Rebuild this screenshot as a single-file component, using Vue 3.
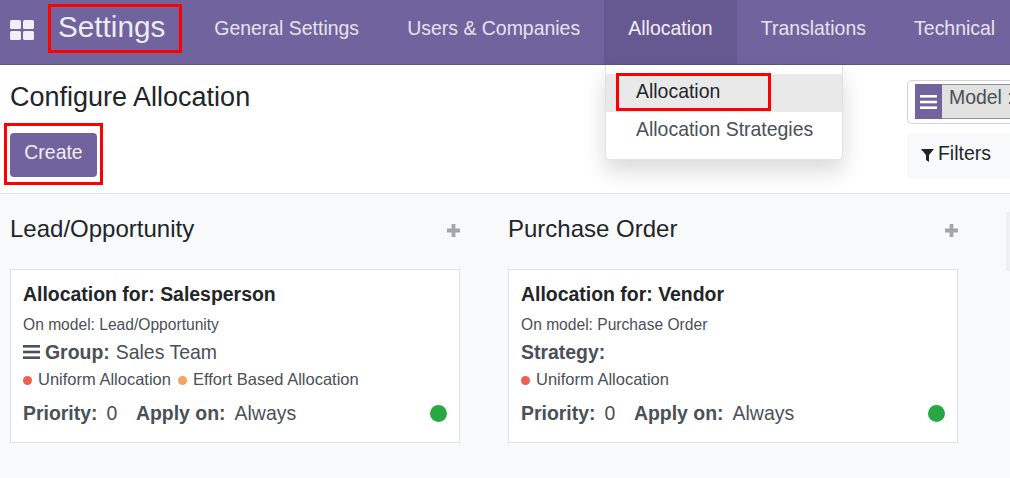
<script setup>
const menus = [
  { label: 'General Settings' },
  { label: 'Users & Companies' },
  { label: 'Allocation', active: true },
  { label: 'Translations' },
  { label: 'Technical' },
]
const columns = [
  {
    title: 'Lead/Opportunity',
    name: 'Salesperson',
    model: 'Lead/Opportunity',
    label: 'Group:',
    value: 'Sales Team',
    icon: true,
    tags: [
      { text: 'Uniform Allocation', color: '#ee5f52' },
      { text: 'Effort Based Allocation', color: '#f4a460' },
    ],
  },
  {
    title: 'Purchase Order',
    name: 'Vendor',
    model: 'Purchase Order',
    label: 'Strategy:',
    value: '',
    icon: false,
    tags: [{ text: 'Uniform Allocation', color: '#ee5f52' }],
  },
]
</script>

<template>
  <div class="page">
    <header class="navbar">
      <button class="apps" aria-label="Apps">
        <svg width="24" height="20" viewBox="0 0 24 20"><rect x="0" y="0" width="11" height="9" rx="1.5" /><rect x="13" y="0" width="11" height="9" rx="1.5" /><rect x="0" y="11" width="11" height="9" rx="1.5" /><rect x="13" y="11" width="11" height="9" rx="1.5" /></svg>
      </button>
      <span class="brand">Settings</span>
      <nav class="menu">
        <span v-for="m in menus" :key="m.label" class="menu-item" :class="{ active: m.active }">{{ m.label }}</span>
      </nav>
    </header>

    <section class="panel">
      <div class="panel-left">
        <h1 class="title">Configure Allocation</h1>
        <button class="create">Create</button>
      </div>
      <div class="panel-right">
        <div class="search">
          <span class="facet-icon">
            <svg width="17" height="14" viewBox="0 0 17 14"><rect y="0" width="17" height="2.6" /><rect y="5.7" width="17" height="2.6" /><rect y="11.4" width="17" height="2.6" /></svg>
          </span>
          <span class="facet-text">Model :</span>
        </div>
        <div class="filters">
          <svg width="13" height="13" viewBox="0 0 13 13"><path d="M0 0H13L8 6V13L5 11V6Z" /></svg>
          <span>Filters</span>
        </div>
      </div>
    </section>

    <main class="board">
      <div v-for="c in columns" :key="c.title" class="column">
        <div class="col-head">
          <span class="col-title">{{ c.title }}</span>
          <svg class="plus" width="13" height="13" viewBox="0 0 13 13"><path d="M4.6 0H8.4V4.6H13V8.4H8.4V13H4.6V8.4H0V4.6H4.6Z" /></svg>
        </div>
        <article class="card">
          <div class="card-title">Allocation for: {{ c.name }}</div>
          <div class="card-model">On model: {{ c.model }}</div>
          <div class="card-group">
            <svg v-if="c.icon" class="bars" width="17" height="14" viewBox="0 0 17 14"><rect y="0" width="17" height="2.6" /><rect y="5.7" width="17" height="2.6" /><rect y="11.4" width="17" height="2.6" /></svg>
            <b>{{ c.label }}</b>
            <span v-if="c.value" class="group-value">{{ c.value }}</span>
          </div>
          <div class="card-tags">
            <span v-for="t in c.tags" :key="t.text" class="tag"><i class="dot" :style="{ background: t.color }"></i>{{ t.text }}</span>
          </div>
          <div class="card-foot">
            <b>Priority:</b><span class="v0">0</span>
            <b class="apply">Apply on:</b><span class="v1">Always</span>
            <i class="status"></i>
          </div>
        </article>
      </div>
      <div class="next-col"></div>
    </main>

    <div class="dropdown">
      <div class="dd-item selected">Allocation</div>
      <div class="dd-item">Allocation Strategies</div>
    </div>

    <span class="mark mark-brand"></span>
    <span class="mark mark-create"></span>
    <span class="mark mark-dd"></span>
  </div>
</template>

<style>
html, body { margin: 0; padding: 0; overflow: hidden; }
</style>

<style scoped>
.page {
  position: relative;
  width: 1010px;
  height: 478px;
  overflow: hidden;
  background: #f8f9fa;
  font-family: "Liberation Sans", Arial, sans-serif;
  font-size: 19.44px;
  color: #495057;
}
.navbar {
  display: flex;
  align-items: stretch;
  height: 64px;
  background: #71639e;
  border-bottom: 1px solid #5f5387;
  color: #fff;
  white-space: nowrap;
}
.apps {
  display: flex;
  flex: none;
  align-items: center;
  box-sizing: border-box;
  margin: 0;
  padding: 0 0 4px 10px;
  width: 58px;
  border: 0;
  background: none;
}
.apps svg { display: block; fill: #f1eff6; }
.brand {
  flex: none;
  width: 132.2px;
  box-sizing: border-box;
  font-size: 29.7px;
  line-height: 53px;
  color: #eeecf4;
}
.menu { display: flex; flex: none; }
.menu-item {
  padding: 0 24.1px;
  line-height: 57px;
  color: #e6e3ef;
}
.menu-item.active { background: #665991; color: #f1eff6; }
.panel {
  display: flex;
  justify-content: space-between;
  height: 128px;
  background: #fff;
  border-bottom: 1px solid #dee2e6;
}
.panel-left { padding-left: 10px; }
.title {
  margin: 0;
  padding-top: 15px;
  font-size: 27px;
  line-height: 34px;
  font-weight: 400;
  color: #212529;
}
.create {
  display: block;
  margin-top: 19px;
  width: 87px;
  height: 44px;
  padding: 0 0 5px;
  border: 0;
  border-radius: 4px;
  background: #71639e;
  color: #f1eff6;
  font: inherit;
}
.panel-right { width: 103px; padding-top: 15px; }
.search {
  display: flex;
  box-sizing: border-box;
  height: 44px;
  padding: 3px 0 4px 7px;
  border: 1px solid #ced4da;
  border-right: 0;
  border-radius: 5px 0 0 5px;
}
.facet-icon {
  display: flex;
  flex: none;
  width: 27px;
  align-items: center;
  justify-content: center;
  background: #71639e;
}
.facet-icon svg { display: block; fill: #fff; }
.facet-text {
  flex: 1;
  box-sizing: border-box;
  overflow: hidden;
  padding-left: 7px;
  line-height: 24px;
  background: #e2e2e0;
  border-top: 1px solid #8f9194;
  border-bottom: 1px solid #8f9194;
  white-space: nowrap;
  color: #495057;
}
.filters {
  display: flex;
  align-items: center;
  gap: 4px;
  height: 45px;
  margin-top: 9px;
  padding: 0 0 5px 14px;
  box-sizing: border-box;
  background: #f8f9fa;
  border-radius: 4px 0 0 4px;
  color: #212529;
}
.filters svg { margin-top: 5px; fill: #212529; }
.board {
  display: flex;
  gap: 48px;
  padding-left: 10px;
}
.column { width: 450px; flex: none; }
.col-head {
  display: flex;
  align-items: center;
  justify-content: space-between;
  box-sizing: border-box;
  height: 75px;
  padding-bottom: 5px;
}
.col-title {
  font-size: 24px;
  line-height: 28px;
  color: #212529;
}
.plus { fill: #a3a6ae; margin-top: 2px; }
.card {
  box-sizing: border-box;
  height: 174px;
  padding: 12px 12px 0;
  background: #fff;
  border: 1px solid #dee2e6;
}
.card-title {
  font-weight: 700;
  line-height: 24px;
  color: #212529;
}
.card-model {
  margin-top: 8px;
  font-size: 15.6px;
  line-height: 22px;
}
.card-group {
  display: flex;
  align-items: center;
  gap: 5px;
  height: 32px;
}
.group-value { margin-left: 1px; }
.bars { fill: #495057; }
.card-tags {
  display: flex;
  gap: 7px;
  height: 23px;
  font-size: 16.5px;
  line-height: 23px;
}
.tag { display: inline-flex; align-items: center; }
.dot {
  width: 9px;
  height: 9px;
  margin: 1px 6px 0 0;
  border-radius: 50%;
}
.card-foot {
  position: relative;
  display: flex;
  align-items: center;
  height: 24px;
  margin-top: 10px;
}
.v0 { margin-left: 9px; }
.apply { margin-left: 18.6px; }
.v1 { margin-left: 9px; }
.status {
  position: absolute;
  right: 0;
  top: 4px;
  width: 17px;
  height: 17px;
  border-radius: 50%;
  background: #28a745;
}
.next-col {
  flex: none;
  width: 10px;
  height: 59px;
  margin-top: 18px;
  background: #eef0f2;
}
.dropdown {
  position: absolute;
  left: 605px;
  top: 65px;
  box-sizing: border-box;
  width: 238px;
  height: 95px;
  padding-top: 9px;
  background: #fff;
  border: 1px solid #dee2e6;
  border-top: 0;
  border-radius: 0 0 5px 5px;
  box-shadow: 0 11px 22px rgba(0, 0, 0, .15);
}
.dd-item {
  height: 38px;
  padding-left: 30px;
  line-height: 34px;
  color: #495057;
}
.dd-item.selected { background: #e9e9e9; color: #212529; }
.mark {
  position: absolute;
  box-sizing: border-box;
  border: 3px solid #f00;
}
.mark-brand { left: 48px; top: 4px; width: 134px; height: 49px; }
.mark-create { left: 4px; top: 123px; width: 99px; height: 62px; }
.mark-dd { left: 616px; top: 73px; width: 155px; height: 38px; }
</style>
